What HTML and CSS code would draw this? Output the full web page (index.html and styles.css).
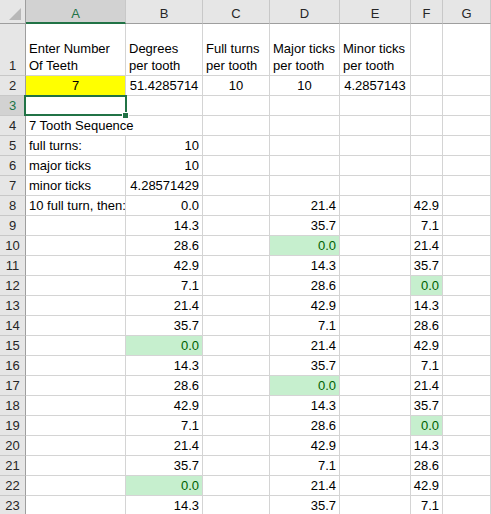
FILE: index.html
```html
<!DOCTYPE html>
<html>
<head>
<meta charset="utf-8">
<link rel="stylesheet" href="styles.css">
</head>
<body>
<div class="sheet">
  <div class="corner"><span class="tri"></span></div>
  <div class="ch ch-sel">A</div>
  <div class="ch">B</div>
  <div class="ch">C</div>
  <div class="ch">D</div>
  <div class="ch">E</div>
  <div class="ch">F</div>
  <div class="ch">G</div>

  <div class="rh rh-tall">1</div>
  <div class="c wrap">Enter Number Of Teeth</div>
  <div class="c wrap">Degrees per tooth</div>
  <div class="c wrap">Full turns per tooth</div>
  <div class="c wrap">Major ticks per tooth</div>
  <div class="c wrap">Minor ticks per tooth</div>
  <div class="c"></div>
  <div class="c"></div>

  <div class="rh">2</div>
  <div class="c ctr yel">7</div>
  <div class="c ctr">51.4285714</div>
  <div class="c ctr">10</div>
  <div class="c ctr">10</div>
  <div class="c ctr">4.2857143</div>
  <div class="c"></div>
  <div class="c"></div>

  <div class="rh rh-sel">3</div>
  <div class="c sel"><span class="handle"></span></div>
  <div class="c"></div>
  <div class="c"></div>
  <div class="c"></div>
  <div class="c"></div>
  <div class="c"></div>
  <div class="c"></div>

  <div class="rh">4</div>
  <div class="c span2">7 Tooth Sequence</div>
  <div class="c"></div>
  <div class="c"></div>
  <div class="c"></div>
  <div class="c"></div>
  <div class="c"></div>

  <div class="rh">5</div>
  <div class="c">full turns:</div>
  <div class="c r">10</div>
  <div class="c"></div>
  <div class="c"></div>
  <div class="c"></div>
  <div class="c"></div>
  <div class="c"></div>

  <div class="rh">6</div>
  <div class="c">major ticks</div>
  <div class="c r">10</div>
  <div class="c"></div>
  <div class="c"></div>
  <div class="c"></div>
  <div class="c"></div>
  <div class="c"></div>

  <div class="rh">7</div>
  <div class="c">minor ticks</div>
  <div class="c r">4.28571429</div>
  <div class="c"></div>
  <div class="c"></div>
  <div class="c"></div>
  <div class="c"></div>
  <div class="c"></div>

  <div class="rh">8</div>
  <div class="c">10 full turn, then:</div>
  <div class="c r">0.0</div>
  <div class="c"></div>
  <div class="c r">21.4</div>
  <div class="c"></div>
  <div class="c r">42.9</div>
  <div class="c"></div>

  <div class="rh">9</div>
  <div class="c"></div>
  <div class="c r">14.3</div>
  <div class="c"></div>
  <div class="c r">35.7</div>
  <div class="c"></div>
  <div class="c r">7.1</div>
  <div class="c"></div>

  <div class="rh">10</div>
  <div class="c"></div>
  <div class="c r">28.6</div>
  <div class="c"></div>
  <div class="c r good">0.0</div>
  <div class="c"></div>
  <div class="c r">21.4</div>
  <div class="c"></div>

  <div class="rh">11</div>
  <div class="c"></div>
  <div class="c r">42.9</div>
  <div class="c"></div>
  <div class="c r">14.3</div>
  <div class="c"></div>
  <div class="c r">35.7</div>
  <div class="c"></div>

  <div class="rh">12</div>
  <div class="c"></div>
  <div class="c r">7.1</div>
  <div class="c"></div>
  <div class="c r">28.6</div>
  <div class="c"></div>
  <div class="c r good">0.0</div>
  <div class="c"></div>

  <div class="rh">13</div>
  <div class="c"></div>
  <div class="c r">21.4</div>
  <div class="c"></div>
  <div class="c r">42.9</div>
  <div class="c"></div>
  <div class="c r">14.3</div>
  <div class="c"></div>

  <div class="rh">14</div>
  <div class="c"></div>
  <div class="c r">35.7</div>
  <div class="c"></div>
  <div class="c r">7.1</div>
  <div class="c"></div>
  <div class="c r">28.6</div>
  <div class="c"></div>

  <div class="rh">15</div>
  <div class="c"></div>
  <div class="c r good">0.0</div>
  <div class="c"></div>
  <div class="c r">21.4</div>
  <div class="c"></div>
  <div class="c r">42.9</div>
  <div class="c"></div>

  <div class="rh">16</div>
  <div class="c"></div>
  <div class="c r">14.3</div>
  <div class="c"></div>
  <div class="c r">35.7</div>
  <div class="c"></div>
  <div class="c r">7.1</div>
  <div class="c"></div>

  <div class="rh">17</div>
  <div class="c"></div>
  <div class="c r">28.6</div>
  <div class="c"></div>
  <div class="c r good">0.0</div>
  <div class="c"></div>
  <div class="c r">21.4</div>
  <div class="c"></div>

  <div class="rh">18</div>
  <div class="c"></div>
  <div class="c r">42.9</div>
  <div class="c"></div>
  <div class="c r">14.3</div>
  <div class="c"></div>
  <div class="c r">35.7</div>
  <div class="c"></div>

  <div class="rh">19</div>
  <div class="c"></div>
  <div class="c r">7.1</div>
  <div class="c"></div>
  <div class="c r">28.6</div>
  <div class="c"></div>
  <div class="c r good">0.0</div>
  <div class="c"></div>

  <div class="rh">20</div>
  <div class="c"></div>
  <div class="c r">21.4</div>
  <div class="c"></div>
  <div class="c r">42.9</div>
  <div class="c"></div>
  <div class="c r">14.3</div>
  <div class="c"></div>

  <div class="rh">21</div>
  <div class="c"></div>
  <div class="c r">35.7</div>
  <div class="c"></div>
  <div class="c r">7.1</div>
  <div class="c"></div>
  <div class="c r">28.6</div>
  <div class="c"></div>

  <div class="rh">22</div>
  <div class="c"></div>
  <div class="c r good">0.0</div>
  <div class="c"></div>
  <div class="c r">21.4</div>
  <div class="c"></div>
  <div class="c r">42.9</div>
  <div class="c"></div>

  <div class="rh">23</div>
  <div class="c"></div>
  <div class="c r">14.3</div>
  <div class="c"></div>
  <div class="c r">35.7</div>
  <div class="c"></div>
  <div class="c r">7.1</div>
  <div class="c"></div>
</div>
</body>
</html>
```

FILE: styles.css
```css
html, body {
  margin: 0;
  padding: 0;
  background: #ffffff;
  overflow: hidden;
}

.sheet {
  display: grid;
  grid-template-columns: 26px 100px 77px 67px 70px 71px 32px 48px;
  grid-template-rows: 24px 52px repeat(22, 20px);
  font-family: "Liberation Sans", Arial, sans-serif;
  font-size: 13px;
  color: #000000;
}

.corner {
  position: relative;
  background: #e6e6e6;
  border-right: 1px solid #9e9e9e;
  border-bottom: 1px solid #9e9e9e;
  box-sizing: border-box;
}

.tri {
  position: absolute;
  right: 4px;
  bottom: 3px;
  width: 0;
  height: 0;
  border-left: 12px solid transparent;
  border-bottom: 12px solid #b8b8b8;
}

.ch {
  background: #e6e6e6;
  border-right: 1px solid #c8c8c8;
  border-bottom: 1px solid #9e9e9e;
  box-sizing: border-box;
  display: flex;
  align-items: center;
  justify-content: center;
  padding-top: 3px;
  color: #262626;
  font-size: 13px;
}

.ch-sel {
  background: #d2d2d2;
  color: #217346;
  border-bottom: 2px solid #217346;
  padding-top: 4px;
}

.rh {
  background: #e6e6e6;
  border-right: 1px solid #9e9e9e;
  border-bottom: 1px solid #c8c8c8;
  box-sizing: border-box;
  display: flex;
  align-items: center;
  justify-content: center;
  color: #262626;
  font-size: 13px;
}

.rh-tall {
  align-items: flex-end;
  padding-bottom: 2px;
}

.rh-sel {
  background: #d2d2d2;
  color: #217346;
}

.c {
  border-right: 1px solid #d4d4d4;
  border-bottom: 1px solid #d4d4d4;
  box-sizing: border-box;
  display: flex;
  align-items: center;
  padding: 0 3px;
  white-space: nowrap;
  overflow: hidden;
  position: relative;
}

.wrap {
  white-space: normal;
  align-items: flex-end;
  line-height: 17px;
  padding-bottom: 1px;
}

.ctr {
  justify-content: center;
}

.r {
  justify-content: flex-end;
}

.yel {
  background: #ffff00;
}

.good {
  background: #c6efce;
  color: #006100;
}

.span2 {
  grid-column: span 2;
}

.sel {
  overflow: visible;
}

.sel::after {
  content: "";
  position: absolute;
  left: -2px;
  top: -1px;
  right: -2px;
  bottom: -1px;
  border: 2px solid #217346;
  pointer-events: none;
}

.handle {
  position: absolute;
  right: -4px;
  bottom: -4px;
  width: 5px;
  height: 5px;
  background: #217346;
  border: 1px solid #ffffff;
  z-index: 2;
}
```
